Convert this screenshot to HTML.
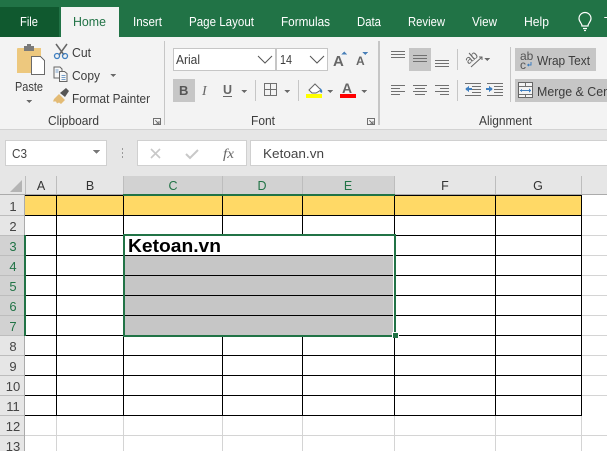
<!DOCTYPE html>
<html><head><meta charset="utf-8"><style>
html,body{margin:0;padding:0;width:607px;height:451px;overflow:hidden;background:#fff}
svg{display:block}
text{font-family:"Liberation Sans",sans-serif;font-size:12.5px;fill:#3c3c3c}
.t{font-size:13px;fill:#fff}
.h{font-size:12.5px;fill:#333}
.r{fill:#444;font-size:13px}
.a{fill:#6a6a6a}
.s{fill:none;stroke:#707070;stroke-width:1}
</style></head><body>
<svg width="607" height="451" viewBox="0 0 607 451" xmlns="http://www.w3.org/2000/svg" shape-rendering="crispEdges">
<rect width="607" height="451" fill="#fff"/>
<rect width="607" height="37" fill="#217346"/>
<rect y="7" width="59" height="30" fill="#10592f"/>
<rect x="61" y="7" width="58" height="30" fill="#f3f3f3"/>
<rect y="37" width="607" height="92" fill="#f3f3f3"/>
<rect y="129" width="607" height="47" fill="#e6e6e6"/>
<rect y="129" width="607" height="1" fill="#d2d2d2"/>

<g text-rendering="geometricPrecision">
<text class="t" x="20" y="26" textLength="18" lengthAdjust="spacingAndGlyphs">File</text>
<text class="t" x="73" y="26" textLength="33" lengthAdjust="spacingAndGlyphs" style="fill:#217346">Home</text>
<text class="t" x="133" y="26" textLength="29" lengthAdjust="spacingAndGlyphs">Insert</text>
<text class="t" x="189" y="26" textLength="65" lengthAdjust="spacingAndGlyphs">Page Layout</text>
<text class="t" x="281" y="26" textLength="49" lengthAdjust="spacingAndGlyphs">Formulas</text>
<text class="t" x="357" y="26" textLength="24" lengthAdjust="spacingAndGlyphs">Data</text>
<text class="t" x="408" y="26" textLength="37" lengthAdjust="spacingAndGlyphs">Review</text>
<text class="t" x="472" y="26" textLength="25" lengthAdjust="spacingAndGlyphs">View</text>
<text class="t" x="524" y="26" textLength="25" lengthAdjust="spacingAndGlyphs">Help</text>
<text class="t" x="604" y="26">T</text>
</g>
<g shape-rendering="geometricPrecision" fill="none" stroke="#fff" stroke-width="1.200">
<path d="M582 26c0-3-3-4-3-7.500a6 6 0 0 1 12 0c0 3.500-3 4.500-3 7.500z"/><path d="M583 28.500h4M584 30.500h2"/>
</g>

<!-- Clipboard -->
<rect x="17" y="48" width="24" height="25" rx="1" fill="#edc87e"/>
<rect x="24" y="46" width="10" height="5" fill="#7a7a7a"/><rect x="27" y="44" width="4" height="3" fill="#7a7a7a"/>
<path d="M31.500 56.500h9l4 4v14h-13z" fill="#fff" stroke="#6a6a6a"/>
<text x="15" y="91" textLength="28" lengthAdjust="spacingAndGlyphs">Paste</text>
<path d="M26 100h6l-3 3z" class="a"/>
<g shape-rendering="geometricPrecision">
<path d="M56 44l8 11M67 44l-8 11" stroke="#666" stroke-width="1.500" fill="none"/>
<circle cx="57" cy="56" r="2.500" fill="none" stroke="#3f7fc0" stroke-width="1.300"/><circle cx="65" cy="56" r="2.500" fill="none" stroke="#3f7fc0" stroke-width="1.300"/>
<path d="M54 67h6l2 2v9h-8z" fill="#f7f7f7" stroke="#666"/>
<path d="M59.500 71.500h5l2.500 2v8h-7.500z" fill="#f7f7f7" stroke="#666"/>
<path d="M61.500 75.500h4M61.500 77.500h4M61.500 79.500h4M55.500 70h3M55.500 72h3" stroke="#4a80b8" stroke-width=".8"/>
<path d="M54 99l5-5 6 6-4 4-2-1.500-2 1-1-2-3 0z" fill="#e3bb75"/><path d="M60 93l6-5 3 3-4 6z" fill="#555"/>
</g>
<text x="72" y="57" textLength="19" lengthAdjust="spacingAndGlyphs">Cut</text>
<text x="72" y="80" textLength="28" lengthAdjust="spacingAndGlyphs">Copy</text>
<path d="M110 74h6l-3 3z" class="a"/>
<text x="72" y="103" textLength="78" lengthAdjust="spacingAndGlyphs">Format Painter</text>
<text x="48" y="125" textLength="51" lengthAdjust="spacingAndGlyphs">Clipboard</text>
<path d="M153.500 118.500h7v6h-7zM155.500 120.500l3.500 3.500M156 124h3v-3" class="s" stroke-width=".8"/>
<rect x="164" y="41" width="1" height="84" fill="#c6c6c6"/>

<!-- Font -->
<rect x="173.500" y="48.500" width="102" height="22" fill="#fff" stroke="#c6c6c6"/>
<rect x="276.500" y="48.500" width="51" height="22" fill="#fff" stroke="#c6c6c6"/>
<text x="176" y="64" textLength="24" lengthAdjust="spacingAndGlyphs">Arial</text>
<text x="280" y="64" textLength="12" lengthAdjust="spacingAndGlyphs">14</text>
<g shape-rendering="geometricPrecision" fill="none" stroke="#555" stroke-width="1">
<path d="M258 56l7 7 7-7M310 56l7 7 7-7"/>
</g>
<text x="333" y="66" style="font-size:15px;fill:#666;font-weight:bold">A</text>
<path d="M341 54.500l3-3 3 3z" fill="#4a80b8"/>
<text x="356" y="65" style="font-size:12px;fill:#666;font-weight:bold">A</text>
<path d="M362 52h6l-3 3z" fill="#4a80b8"/>
<rect x="378" y="41" width="2" height="84" fill="#c6c6c6"/>
<rect x="173" y="79" width="22" height="23" fill="#c6c6c6"/>
<text x="179" y="95" style="font-size:13px;font-weight:bold;fill:#555">B</text>
<text x="202" y="95" style="font-size:14px;font-style:italic;fill:#666;font-family:'Liberation Serif',serif">I</text>
<text x="223" y="94" style="font-size:12.500px;font-weight:bold;fill:#666">U</text>
<rect x="223" y="96" width="9" height="1" fill="#666"/>
<path d="M241 90h6l-3 3z" class="a"/>
<rect x="255" y="80" width="1" height="21" fill="#c6c6c6"/>
<path d="M264.500 83.500h12v12h-12zM270.500 83.500v12M264.500 89.500h12" class="s"/>
<path d="M284 90h6l-3 3z" class="a"/>
<rect x="298" y="80" width="1" height="21" fill="#c6c6c6"/>
<g shape-rendering="geometricPrecision">
<path d="M309 90l6-6 6 6-5 3h-4z" fill="#fff" stroke="#666"/>
<path d="M320 88q3 2 2 5l-2-1z" fill="#3f7fc0"/>
</g>
<rect x="306" y="94" width="16" height="4" fill="#ffff00"/>
<path d="M327 90h6l-3 3z" class="a"/>
<text x="342" y="93" style="font-size:14px;font-weight:bold;fill:#666">A</text>
<rect x="340" y="94" width="16" height="4" fill="#ff0000"/>
<path d="M361 90h6l-3 3z" class="a"/>
<text x="251" y="125" textLength="24" lengthAdjust="spacingAndGlyphs">Font</text>
<path d="M367.500 118.500h7v6h-7zM369.500 120.500l3.500 3.500M370 124h3v-3" class="s" stroke-width=".8"/>

<!-- Alignment -->
<rect x="409" y="48" width="22" height="23" fill="#c6c6c6"/>
<path d="M391 51.500h14M391 54.500h14M391 57.500h14M413 55.500h14M413 58.500h14M413 61.500h14M435 60.500h14M435 63.500h14M435 66.500h14" class="s"/>
<rect x="457" y="49" width="1" height="21" fill="#c6c6c6"/>
<rect x="457" y="80" width="1" height="21" fill="#c6c6c6"/>
<g shape-rendering="geometricPrecision">
<text x="465" y="61" transform="rotate(-40 472 58)" style="font-size:12px;fill:#666">ab</text>
<path d="M471 67l11-10M479 57h3v3" fill="none" stroke="#666"/>
</g>
<path d="M484 58h6l-3 3z" class="a"/>
<path d="M391 85.500h14M391 88.500h9M391 91.500h14M391 94.500h9M413 85.500h14M415 88.500h10M413 91.500h14M415 94.500h10M435 85.500h14M440 88.500h9M435 91.500h14M440 94.500h9" class="s"/>
<path d="M465 83.500h16M472 86.500h9M472 89.500h9M472 92.500h9M465 95.500h16M487 83.500h16M494 86.500h9M494 89.500h9M494 92.500h9M487 95.500h16" class="s"/>
<path d="M465 89l4-3v2h3v2h-3v2zM493 89l-4-3v2h-3v2h3v2z" fill="#3f7fc0"/>
<rect x="510" y="47" width="1" height="55" fill="#c6c6c6"/>
<rect x="515" y="48" width="81" height="23" fill="#c6c6c6"/>
<rect x="515" y="79" width="92" height="23" fill="#c6c6c6"/>
<text x="520" y="60" style="font-size:12px;fill:#555">ab</text>
<text x="520" y="69" style="font-size:12px;fill:#555">c</text>
<path d="M531 62v3h-3M529 64l-1.500 1 1.500 1" fill="none" stroke="#3f7fc0" stroke-width=".8"/>
<text x="537" y="65" textLength="53" lengthAdjust="spacingAndGlyphs">Wrap Text</text>
<rect x="518.500" y="82.500" width="14" height="15" fill="#f3f3f3" stroke="#666"/>
<path d="M519 86.500h13M519 94.500h13M525.500 83v3M525.500 95v3" class="s"/>
<path d="M520 90.500h11" stroke="#3f7fc0" fill="none"/><path d="M520 90.500l2-2v4zM531 90.500l-2-2v4z" fill="#3f7fc0"/>
<text x="537" y="96" textLength="73" lengthAdjust="spacingAndGlyphs">Merge &amp; Cen</text>
<text x="479" y="125" textLength="53" lengthAdjust="spacingAndGlyphs">Alignment</text>

<!-- Formula bar -->
<rect x="5.500" y="140.500" width="101" height="25" fill="#fff" stroke="#d0d0d0"/>
<text x="12" y="158" textLength="15" lengthAdjust="spacingAndGlyphs" style="font-size:12.500px;fill:#444">C3</text>
<path d="M93 150h7l-3.500 4z" fill="#777"/>
<path d="M122 148h1v2h-1zM122 152h1v2h-1zM122 156h1v2h-1z" fill="#999"/>
<rect x="137.500" y="140.500" width="109" height="25" fill="#fff" stroke="#d0d0d0"/>
<rect x="250" y="140" width="357" height="26" fill="#fff"/>
<rect x="250" y="140" width="357" height="1" fill="#d0d0d0"/><rect x="250" y="165" width="357" height="1" fill="#d0d0d0"/><rect x="250" y="140" width="1" height="26" fill="#d0d0d0"/>
<g shape-rendering="geometricPrecision" fill="none" stroke="#c8c8c8" stroke-width="1.600">
<path d="M151 149l9 9M160 149l-9 9"/><path d="M186 154l4 4 8-8" stroke-width="2"/>
</g>
<text x="223" y="158" textLength="11" lengthAdjust="spacingAndGlyphs" style="font-family:'Liberation Serif',serif;font-style:italic;font-size:14px;fill:#666">fx</text>
<text x="263" y="158" textLength="61" lengthAdjust="spacingAndGlyphs" style="font-size:13px;fill:#444">Ketoan.vn</text>

<!-- Headers -->
<rect y="176" width="607" height="19" fill="#e6e6e6"/>
<rect y="195" width="25" height="256" fill="#e6e6e6"/>
<rect x="123" y="176" width="272" height="19" fill="#d2d2d2"/>
<rect y="235" width="25" height="101" fill="#d2d2d2"/>
<path d="M10 192L22 180V192z" fill="#b4b4b4" shape-rendering="geometricPrecision"/>
<path d="M25 176h1v19h-1zM56 176h1v19h-1zM123 176h1v19h-1zM222 176h1v19h-1zM302 176h1v19h-1zM394 176h1v19h-1zM495 176h1v19h-1zM581 176h1v19h-1z" fill="#bdbdbd"/>
<rect y="194" width="607" height="1" fill="#ababab"/>
<rect x="24" y="195" width="1" height="256" fill="#ababab"/>
<path d="M0 215h24v1H0zM0 235h24v1H0zM0 255h24v1H0zM0 275h24v1H0zM0 295h24v1H0zM0 315h24v1H0zM0 335h24v1H0zM0 355h24v1H0zM0 375h24v1H0zM0 395h24v1H0zM0 415h24v1H0zM0 435h24v1H0z" fill="#bdbdbd"/>
<g text-anchor="middle">
<text class="h" x="41" y="190">A</text><text class="h" x="90" y="190">B</text>
<text class="h" x="173" y="190" style="fill:#217346">C</text><text class="h" x="262" y="190" style="fill:#217346">D</text><text class="h" x="348" y="190" style="fill:#217346">E</text>
<text class="h" x="445" y="190">F</text><text class="h" x="538" y="190">G</text>
<text class="r" x="13" y="211">1</text><text class="r" x="13" y="231">2</text>
<text class="r" x="13" y="251" style="fill:#217346">3</text><text class="r" x="13" y="271" style="fill:#217346">4</text><text class="r" x="13" y="291" style="fill:#217346">5</text><text class="r" x="13" y="311" style="fill:#217346">6</text><text class="r" x="13" y="331" style="fill:#217346">7</text>
<text class="r" x="13" y="351">8</text><text class="r" x="13" y="371">9</text><text class="r" x="13" y="391">10</text><text class="r" x="13" y="411">11</text><text class="r" x="13" y="431">12</text><text class="r" x="13" y="451">13</text>
</g>

<!-- Grid -->
<rect x="25" y="195" width="557" height="20" fill="#ffd966"/>
<rect x="124" y="256" width="269" height="79" fill="#c6c6c6"/>
<!-- light gridlines -->
<path d="M582 215h25v1h-25zM582 235h25v1h-25zM582 255h25v1h-25zM582 275h25v1h-25zM582 295h25v1h-25zM582 315h25v1h-25zM582 335h25v1h-25zM582 355h25v1h-25zM582 375h25v1h-25zM582 395h25v1h-25zM25 435h582v1H25zM56 416h1v35h-1zM123 416h1v35h-1zM222 416h1v35h-1zM302 416h1v35h-1zM394 416h1v35h-1zM495 416h1v35h-1zM581 416h1v35h-1z" fill="#d4d4d4"/>
<!-- black borders -->
<path d="M25 195h557v1H25zM25 215h557v1H25zM25 235h557v1H25zM25 255h557v1H25zM25 275h557v1H25zM25 295h557v1H25zM25 315h557v1H25zM25 335h557v1H25zM25 355h557v1H25zM25 375h557v1H25zM25 395h557v1H25zM25 415h557v1H25z" fill="#000"/>
<path d="M56 195h1v221h-1zM123 195h1v221h-1zM495 195h1v221h-1zM581 195h1v221h-1zM394 195h1v221h-1z" fill="#000"/>
<path d="M222 195h1v40h-1zM302 195h1v40h-1zM222 336h1v80h-1zM302 336h1v80h-1z" fill="#000"/>
<!-- clear merged -->
<rect x="124" y="236" width="270" height="19" fill="#fff"/>
<rect x="393" y="255" width="1" height="80" fill="#fff"/>
<rect x="123" y="194" width="272" height="2" fill="#217346"/>
<rect x="24" y="235" width="2" height="101" fill="#217346"/>
<!-- selection -->
<rect x="123" y="234" width="273" height="2" fill="#217346"/>
<rect x="123" y="335" width="273" height="2" fill="#217346"/>
<rect x="123" y="234" width="2" height="103" fill="#217346"/>
<rect x="394" y="234" width="2" height="103" fill="#217346"/>
<rect x="392" y="332" width="7" height="6" fill="#fff"/>
<rect x="393" y="333" width="5" height="5" fill="#217346"/>
<text x="128" y="252" textLength="93" lengthAdjust="spacingAndGlyphs" style="font-size:18.500px;font-weight:bold;fill:#000">Ketoan.vn</text>
</svg>
</body></html>
